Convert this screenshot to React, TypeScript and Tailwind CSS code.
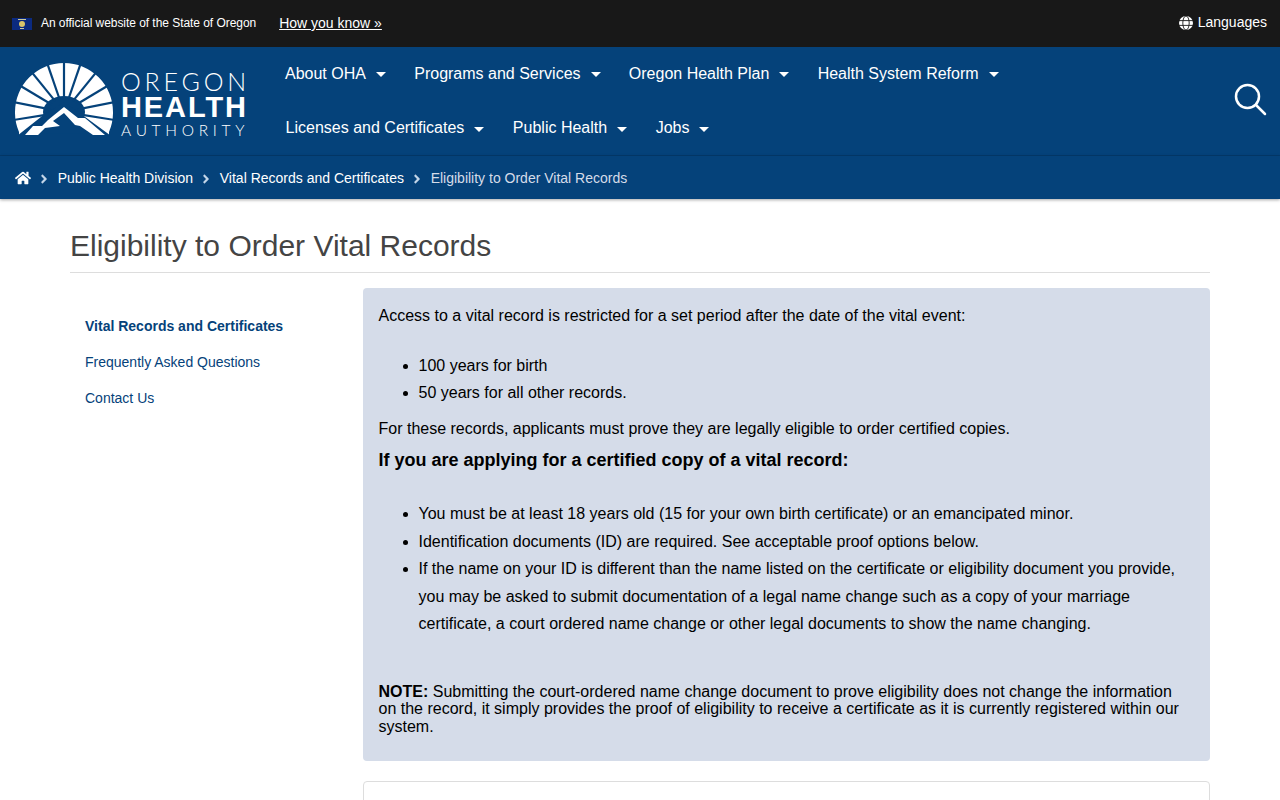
import React from 'react';
import { FaAngleRight, FaHome } from 'react-icons/fa';

const NAV_ROWS = [
  ['About OHA', 'Programs and Services', 'Oregon Health Plan', 'Health System Reform'],
  ['Licenses and Certificates', 'Public Health', 'Jobs'],
];

// gaps between the sun rays, in degrees counter clockwise from the right horizon
const GAPS = [-9, 11, 31, 51, 71, 90, 109, 129, 149, 169, 189];

const BLUE = '#05427a';

function polar(r: number, t: number) {
  const x = 49 + r * Math.cos((t * Math.PI) / 180);
  const y = 49 - r * Math.sin((t * Math.PI) / 180);
  return { x, y };
}

function Logo() {
  return (
    <div className="flex items-start gap-[8px]">
      <svg width="98" height="72" viewBox="0 0 98 72" className="shrink-0">
        <path d="M0 49 A49 49 0 0 1 98 49 A49 49 0 0 1 94 69 L94 72 L4 72 L4 69 A49 49 0 0 1 0 49 Z" fill="#fff" />
        <ellipse cx="49" cy="49" rx="21" ry="16" fill={BLUE} />
        {GAPS.map((t) => {
          const a = polar(14, t);
          const b = polar(52, t);
          return <line key={t} x1={a.x} y1={a.y} x2={b.x} y2={b.y} stroke={BLUE} strokeWidth="2.2" />;
        })}
        <path d="M49 42 L66 54 L92 73 L6 73 L30 54 Z" fill={BLUE} stroke={BLUE} strokeWidth="5" strokeLinejoin="round" />
        <path d="M49 44 L63 55 L70 55 L90 72 L78 72 L65 63 L60 62 L49 50 L38 58 L45 63 L30 65 L23 72 L10 72 L18 63 L27 63 L33 57 Z" fill="#fff" />
      </svg>
      <div className="pt-[5px] flex flex-col text-white">
        <span className="font-['Lato',sans-serif] font-light text-[25px] leading-[26px] tracking-[3.8px]">OREGON</span>
        <span className="font-['Liberation_Sans',sans-serif] font-bold text-[29px] leading-[26px] tracking-[1.9px]">HEALTH</span>
        <span className="font-['Lato',sans-serif] font-light text-[15.5px] leading-[21px] tracking-[4.7px]">AUTHORITY</span>
      </div>
    </div>
  );
}

function NavItem({ label }: { label: string }) {
  return (
    <a className="flex items-center gap-[10px] text-white text-[16px]">
      {label}
      <span className="w-0 h-0 border-x-[5px] border-x-transparent border-t-[5px] border-t-white mt-[2px]" />
    </a>
  );
}

function Crumb() {
  return <FaAngleRight size={14} color="#c3d5e8" className="mx-[6.35px]" />;
}

export default function App() {
  return (
    <div className="h-[800px] overflow-hidden bg-white font-['Liberation_Sans',Arial,sans-serif] text-black">
      <div className="h-[47px] bg-[#181818] flex items-center justify-between pl-[12px] pr-[13px] text-white">
        <div className="flex items-center">
          <svg width="20" height="12" viewBox="0 0 20 12" className="mr-[9px]">
            <rect width="20" height="12" fill="#0b2a80" />
            <rect x="6" y="1" width="8" height="1" fill="#c9c9a0" />
            <circle cx="10" cy="6" r="3" fill="#d9c46a" />
            <rect x="8" y="10" width="4" height="1" fill="#c9c9a0" />
          </svg>
          <span className="text-[12px] tracking-[-0.05px] -mt-[2px]">An official website of the State of Oregon</span>
          <a className="ml-[23px] text-[14px] underline">How you know »</a>
        </div>
        <div className="flex items-center gap-[5px] text-[14px] -mt-[2px]">
          <svg width="14" height="14" viewBox="0 0 14 14">
            <circle cx="7" cy="7" r="7" fill="#fff" />
            <ellipse cx="7" cy="7" rx="3.2" ry="7" fill="none" stroke="#181818" strokeWidth="0.9" />
            <line x1="0" y1="4.6" x2="14" y2="4.6" stroke="#181818" strokeWidth="0.9" />
            <line x1="0" y1="9.4" x2="14" y2="9.4" stroke="#181818" strokeWidth="0.9" />
          </svg>
          Languages
        </div>
      </div>

      <header className="bg-[#05427a] h-[109px] flex pl-[15px] pr-[12px] border-b border-[#043a6c]">
        <div className="pt-[16px] w-[270px] shrink-0"><Logo /></div>
        <nav className="flex-1 flex flex-col gap-y-[1px]">
          <div className="h-[53.5px] flex items-center gap-[28.3px]">
            {NAV_ROWS[0].map((l) => <NavItem key={l} label={l} />)}
          </div>
          <div className="h-[53.5px] flex items-center gap-[28.5px] pl-[0.6px]">
            {NAV_ROWS[1].map((l) => <NavItem key={l} label={l} />)}
          </div>
        </nav>
        <div className="pt-[34px]">
          <svg width="36" height="36" viewBox="0 0 36 36" fill="none" stroke="#fff" strokeWidth="2.5">
            <circle cx="15.5" cy="15.5" r="11.5" />
            <line x1="24" y1="24" x2="33" y2="33" strokeLinecap="round" />
          </svg>
        </div>
      </header>

      <div className="h-[43px] bg-[#05427a] flex items-center pl-[15px] pt-[2px] text-[14px] text-white shadow-[0_1px_3px_rgba(0,0,0,0.35)]">
        <FaHome size={16} color="#fff" className="-mt-[2px]" />
        <Crumb />
        <a>Public Health Division</a>
        <Crumb />
        <a>Vital Records and Certificates</a>
        <Crumb />
        <span className="text-[#d5dce9]">Eligibility to Order Vital Records</span>
      </div>

      <main className="mx-[70px]">
        <h1 className="mt-[28px] h-[46px] border-b border-[#dddddd] text-[30px] leading-[38px] text-[#444444]">Eligibility to Order Vital Records</h1>
        <div className="flex mt-[15px]">
          <aside className="w-[293px] shrink-0 pl-[15px] pt-[20px] text-[14px] text-[#05427a]">
            <a className="block h-[36px] leading-[36px] font-bold">Vital Records and Certificates</a>
            <a className="block h-[36px] leading-[36px]">Frequently Asked Questions</a>
            <a className="block h-[36px] leading-[36px]">Contact Us</a>
          </aside>
          <div className="flex-1">
            <section className="h-[473px] bg-[#d5dce9] rounded-[4px] pl-[15.5px] pr-[16px] pt-[14px] text-[16px] leading-[27.5px]">
              <p>Access to a vital record is restricted for a set period after the date of the vital event:</p>
              <ul className="list-disc pl-[40px] mt-[22.4px]">
                <li>100 years for birth</li>
                <li>50 years for all other records.</li>
              </ul>
              <p className="mt-[8px]">For these records, applicants must prove they are legally eligible to order certified copies.</p>
              <h2 className="text-[18px] font-bold mt-[5px]">If you are applying for a certified copy of a vital record:</h2>
              <ul className="list-disc pl-[40px] mt-[25.6px]">
                <li>You must be at least 18 years old (15 for your own birth certificate) or an emancipated minor.</li>
                <li>Identification documents (ID) are required. See acceptable proof options below.</li>
                <li>If the name on your ID is different than the name listed on the certificate or eligibility document you provide, you may be asked to submit documentation of a legal name change such as a copy of your marriage certificate, a court ordered name change or other legal documents to show the name changing.</li>
              </ul>
              <p className="mt-[44.8px] leading-[17.6px]"><b>NOTE:</b> Submitting the court-ordered name change document to prove eligibility does not change the information on the record, it simply provides the proof of eligibility to receive a certificate as it is currently registered within our system.</p>
            </section>
            <div className="mt-[20px] h-[60px] border border-[#dddddd] rounded-[4px]" />
          </div>
        </div>
      </main>
    </div>
  );
}
